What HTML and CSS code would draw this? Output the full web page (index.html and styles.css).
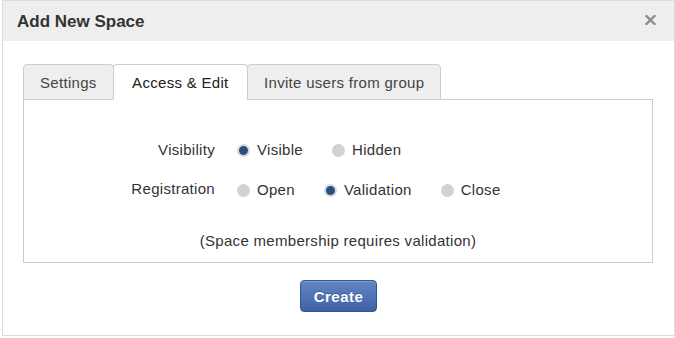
FILE: index.html
```html
<!DOCTYPE html>
<html>
<head>
<meta charset="utf-8">
<link rel="stylesheet" href="styles.css">
</head>
<body>
<div class="dialog">
  <div class="dialog-header">
    <span class="dialog-title">Add New Space</span>
    <button class="close" aria-label="Close">
      <svg width="11" height="10" viewBox="0 0 11 10"><path d="M1.5 1 L9.5 9 M9.5 1 L1.5 9" stroke="#8c8c8c" stroke-width="2.4" stroke-linecap="square"/></svg>
    </button>
  </div>
  <div class="dialog-body">
    <div class="tabs">
      <div class="tab tab-settings">Settings</div>
      <div class="tab active">Access &amp; Edit</div>
      <div class="tab tab-invite">Invite users from group</div>
    </div>
    <div class="panel">
      <div class="form">
        <div class="label">Visibility</div>
        <div class="options">
          <span class="option"><span class="radio checked"></span>Visible</span>
          <span class="option"><span class="radio"></span>Hidden</span>
        </div>
        <div class="label reg">Registration</div>
        <div class="options">
          <span class="option"><span class="radio"></span>Open</span>
          <span class="option"><span class="radio checked"></span>Validation</span>
          <span class="option"><span class="radio"></span>Close</span>
        </div>
      </div>
      <div class="note">(Space membership requires validation)</div>
    </div>
    <div class="actions">
      <button class="btn-create">Create</button>
    </div>
  </div>
</div>
</body>
</html>
```

FILE: styles.css
```css
html, body {
  margin: 0;
  padding: 0;
  background: #fff;
}
body {
  font-family: "Liberation Sans", Arial, sans-serif;
  font-size: 15px;
  color: #333;
  letter-spacing: 0.3px;
}
.dialog {
  margin-left: 2px;
  width: 673px;
  height: 336px;
  box-sizing: border-box;
  border: 1px solid #dcdcdc;
  background: #fff;
}
.dialog-header {
  height: 40px;
  background: #eeeeee;
  display: flex;
  align-items: center;
  justify-content: space-between;
  padding: 0 18px 0 14px;
}
.dialog-title {
  font-weight: bold;
  font-size: 17px;
  color: #333;
  margin-top: 1px;
  letter-spacing: 0;
}
.close {
  border: 0;
  background: none;
  padding: 0;
  width: 11px;
  height: 10px;
  display: flex;
  margin-top: -2px;
}
.dialog-body {
  padding: 23px 20px 0 20px;
}
.tabs {
  display: flex;
  height: 35px;
  position: relative;
  z-index: 1;
}
.tab {
  box-sizing: border-box;
  height: 36px;
  padding: 1px 17px 0;
  display: flex;
  align-items: center;
  background: #eeeeee;
  border: 1px solid #cccccc;
  border-radius: 4px 4px 0 0;
  color: #444;
  margin-right: -1px;
}
.tab-settings {
  padding: 1px 16px 0;
}
.tab-invite {
  padding: 1px 16px 0 16px;
}
.tab.active {
  background: #fff;
  border-bottom-color: #fff;
  color: #222;
  padding: 1px 18.5px 0;
}
.panel {
  border: 1px solid #cccccc;
  height: 164px;
  box-sizing: border-box;
  width: 630px;
  padding-top: 40px;
}
.form {
  display: grid;
  grid-template-columns: 191px auto;
  column-gap: 22px;
  row-gap: 20px;
  align-items: center;
}
.label {
  text-align: right;
  line-height: 20px;
}
.label.reg {
  margin-top: -3px;
}
.options {
  display: flex;
  align-items: center;
  height: 20px;
}
.option {
  display: inline-flex;
  align-items: center;
  margin-right: 29px;
  line-height: 20px;
}
.radio {
  width: 13px;
  height: 13px;
  border-radius: 50%;
  background: #d2d2d2;
  margin-right: 7px;
  box-sizing: border-box;
}
.radio.checked {
  background: #2e4c7e;
  border: 2px solid #d6d9de;
}
.note {
  text-align: center;
  margin-top: 31px;
  line-height: 20px;
}
.actions {
  display: flex;
  justify-content: center;
  padding-top: 17px;
}
.btn-create {
  width: 77px;
  height: 32px;
  border: 1px solid #34558f;
  border-radius: 4px;
  background: linear-gradient(#6285c6, #3f62a5);
  color: #fff;
  font-family: "Liberation Sans", Arial, sans-serif;
  font-weight: bold;
  font-size: 15px;
  letter-spacing: 0.5px;
  text-shadow: 0 -1px 0 rgba(0,0,0,0.25);
  box-shadow: inset 0 1px 0 rgba(255,255,255,0.2);
  padding: 0;
}
```
